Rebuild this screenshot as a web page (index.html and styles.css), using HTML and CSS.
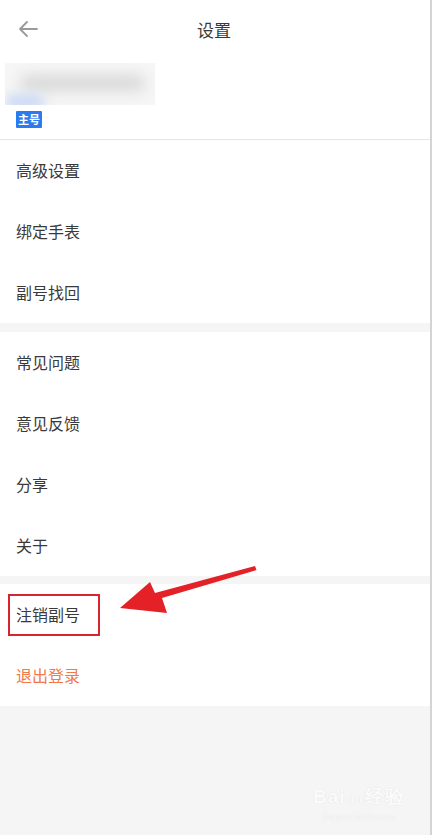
FILE: index.html
```html
<!DOCTYPE html>
<html lang="zh">
<head>
<meta charset="utf-8">
<title>设置</title>
<link rel="stylesheet" href="styles.css">
</head>
<body>
<div class="page">
  <header class="topbar">
    <svg class="back" width="22" height="18" viewBox="0 0 22 18"><path d="M20 9H3M10 2L3 9l7 7" fill="none" stroke="#9a9a9a" stroke-width="1.8" stroke-linecap="round" stroke-linejoin="round"/></svg>
    <h1 class="title">设置</h1>
  </header>
  <section class="account">
    <div class="blurred"><span class="blob1"></span><span class="blob2"></span></div>
    <span class="badge">主号</span>
  </section>
  <ul class="group">
    <li class="row">高级设置</li>
    <li class="row">绑定手表</li>
    <li class="row">副号找回</li>
  </ul>
  <ul class="group g2">
    <li class="row">常见问题</li>
    <li class="row">意见反馈</li>
    <li class="row">分享</li>
    <li class="row">关于</li>
  </ul>
  <ul class="group g3">
    <li class="row"><span class="marked">注销副号</span></li>
    <li class="row logout">退出登录</li>
  </ul>
  <svg class="arrow" width="150" height="60" viewBox="0 0 150 60"><path d="M135 2 L136.5 6 L42 34 L47 49 L0 44 L30 18 L35 29 Z" fill="#e52128"/></svg>
  <div class="watermark"><span class="wm-big">Bai<span class="paw">du</span>经验</span><span class="wm-small">jingyan.baidu.com</span></div>
</div>
</body>
</html>
```
FILE: styles.css
```css
* { box-sizing: border-box; }
html, body { margin: 0; padding: 0; }
body {
  background: #f5f5f5;
  font-family: "Noto Sans CJK SC", "Noto Sans", sans-serif;
  color: #333;
}
.page {
  position: relative;
  width: 432px;
  min-height: 835px;
  border-right: 2px solid #d4d4d4;
}
.topbar {
  height: 60px;
  background: #fff;
  display: flex;
  align-items: center;
  justify-content: center;
  position: relative;
}
.back { position: absolute; left: 17px; top: 20px; }
.title {
  margin: 0 0 2px -2px;
  font-size: 17px;
  font-weight: 400;
  color: #3a3a3a;
}
.account {
  background: #fff;
  height: 80px;
  border-bottom: 1px solid #e6e6e6;
  padding: 3px 0 0 5px;
}
.blurred {
  position: relative;
  width: 150px;
  height: 42px;
  background: #f6f6f6;
  overflow: hidden;
}
.blob1 {
  position: absolute; left: 15px; top: 12px; width: 125px; height: 16px;
  background: #d8d8d8; border-radius: 8px; filter: blur(7px);
}
.blob2 {
  position: absolute; left: 0; top: 32px; width: 40px; height: 14px;
  background: #c9d8f5; border-radius: 7px; filter: blur(6px);
}
.badge {
  display: inline-block;
  margin: 2px 0 0 11px;
  background: #2a7bef;
  color: #fff;
  font-size: 11px;
  font-weight: 700;
  line-height: 17px;
  height: 17px;
  padding: 0 2px;
  border-radius: 1px;
}
.group {
  list-style: none;
  margin: 0;
  padding: 0;
  background: #fff;
}
.g2 { margin-top: 9px; }
.g3 { margin-top: 8px; }
.row {
  height: 61px;
  display: flex;
  align-items: center;
  padding: 0 0 2px 16px;
  font-size: 16px;
  color: #3a3a3a;
}
.marked {
  display: inline-flex;
  align-items: center;
  margin: 2px 0 0 -8px;
  padding: 0 0 2px 6px;
  width: 92px;
  height: 42px;
  border: 2px solid #d9232d;
}
.logout { color: #f07a4c; }
.arrow { position: absolute; left: 120px; top: 564px; }
.watermark {
  position: absolute;
  left: 313px;
  top: 786px;
  display: flex;
  flex-direction: column;
  align-items: center;
  color: #fbfbfb;
  text-shadow: 0 0 1px #d9d9d9;
}
.wm-big { font-family: "Liberation Sans", sans-serif; font-size: 19px; font-weight: 700; letter-spacing: 1px; line-height: 22px; }
.paw { font-size: 11px; margin: 0 2px; }
.wm-small { font-family: "Liberation Sans", sans-serif; font-size: 9px; line-height: 11px; margin-top: 2px; }
```
